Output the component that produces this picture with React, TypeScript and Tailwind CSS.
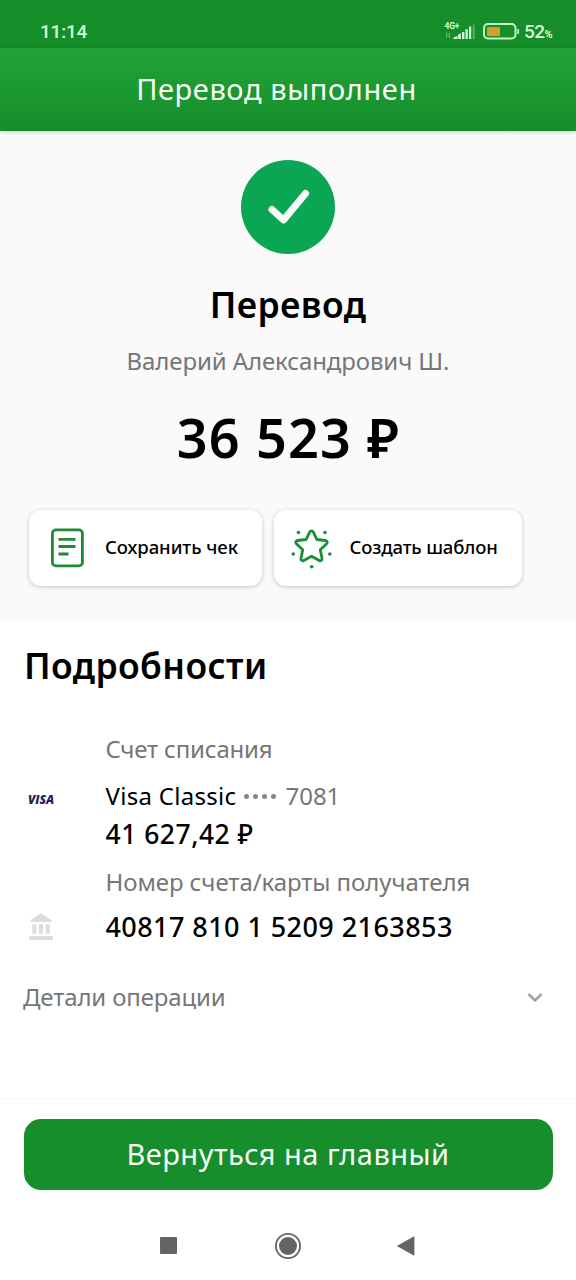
import React from "react";

function StatusBar() {
  return (
    <div className="flex h-12 items-start justify-between bg-[#158e2a] pl-10 pr-6 pt-[20px] text-[#d3fbd3]">
      <span className="font-[Roboto] text-[19px] font-medium leading-6 tracking-[-0.2px]">11:14</span>
      <div className="flex items-start">
        <svg width="32" height="20" viewBox="0 0 32 20" className="mt-[1px]">
          <text x="0.5" y="8" fontFamily="Roboto, sans-serif" fontSize="8.5" fontWeight="700" fill="#d3fbd3" textLength="15">4G+</text>
          <g fill="#d3fbd3">
            <path d="M2.2 11.5h1v5h-1zM4.8 12h1v5h-1z" opacity=".55" />
            <path d="M9.500 18v-1.500l4-1.500V18zM14.200 13.500l2.600-1.200V18h-2.600zM18 11h2.400v7H18zM21.500 8.200h2.300V18h-2.300zM25 5.500h2.200V18H25z" />
            <path d="M28.700 3.500h2V18h-2z" opacity=".35" />
          </g>
        </svg>
        <svg width="38" height="20" viewBox="0 0 38 20" className="ml-[7px] mt-[1px]">
          <rect x="1" y="3" width="31.500" height="14.500" rx="4" fill="none" stroke="#c4f5c4" strokeWidth="2" />
          <rect x="4" y="6" width="13" height="9" rx="1" fill="#cfa32b" />
          <path d="M34.300 8h.8a1 1 0 0 1 1 1v3a1 1 0 0 1-1 1h-.8z" fill="#c4f5c4" />
        </svg>
        <span className="ml-[3px] font-[Roboto] text-[19px] font-medium leading-6 tracking-[-0.6px]">
          52<span className="text-[11px] font-bold">%</span>
        </span>
      </div>
    </div>
  );
}

function ReceiptIcon() {
  return (
    <svg width="34" height="40" viewBox="0 0 34 40" fill="none" stroke="#1f8a38" strokeWidth="2.8">
      <rect x="2.4" y="1.9" width="30" height="36" rx="3.5" />
      <path d="M8.500 11.300h17M8.500 18.500h17M8.500 26h10" />
    </svg>
  );
}

function StarIcon() {
  return (
    <svg width="42" height="42" viewBox="0 0 42 42" fill="none">
      <path
        d="M21.500 3.800c.9 0 1.500.5 1.900 1.300l3.400 7.400 8.600 1c1.800.2 2.500 2 1.200 3.200l-6.300 6 1.700 8.800c.3 1.700-1.300 2.900-2.800 2L21.500 29.300l-7.700 4.200c-1.500.9-3.100-.3-2.800-2l1.700-8.800-6.300-6c-1.300-1.200-.6-3 1.200-3.200l8.600-1 3.400-7.400c.4-.8 1-1.300 1.900-1.300z"
        stroke="#1b8d36"
        strokeWidth="2.800"
        strokeLinejoin="round"
      />
      <g fill="#1b8d36">
        <circle cx="8.500" cy="5.500" r="1.800" />
        <circle cx="35" cy="5.500" r="1.800" />
        <circle cx="3.300" cy="27" r="1.800" />
        <circle cx="39.800" cy="27" r="1.800" />
        <circle cx="21.700" cy="39.700" r="1.800" />
      </g>
    </svg>
  );
}

function BankIcon() {
  return (
    <svg width="24" height="28" viewBox="0 0 24 28" fill="#dcdcdc">
      <path d="M12 0 22.500 7.300V9h-21V7.300zM3.300 11.200h4v9.500h-4zM10 11.200h4v9.500h-4zM16.700 11.200h4v9.500h-4z" />
      <rect x="0" y="23" width="24" height="4" rx="1" />
    </svg>
  );
}

function NavBar() {
  return (
    <div className="mt-[41.500px] flex h-7 items-center pl-[160px]">
      <div className="h-[17px] w-[17px] rounded-[1px] bg-[#646464]" />
      <svg width="28" height="28" viewBox="0 0 28 28" className="ml-[97px]">
        <circle cx="14" cy="14" r="12.100" fill="none" stroke="#646464" strokeWidth="1.800" />
        <circle cx="14" cy="14" r="9" fill="#646464" />
      </svg>
      <svg width="18" height="20" viewBox="0 0 18 20" className="ml-[95px]">
        <path d="M17 .8v18.400L.5 10z" fill="#646464" stroke="#646464" strokeWidth=".8" strokeLinejoin="round" />
      </svg>
    </div>
  );
}

export default function App() {
  return (
    <div className="flex h-[1280px] w-[576px] flex-col overflow-hidden bg-white font-['Noto_Sans',sans-serif] text-black">
      <StatusBar />
      <header className="relative flex h-[83px] justify-center bg-linear-to-b from-[#22a338] to-[#158e2a] pr-[23px] pt-[21px] shadow-[0_1px_4px_rgba(0,0,0,0.2)]">
        <h1 className="whitespace-nowrap text-[29px] leading-10 tracking-[0.600px] text-[#f6fff6]">Перевод выполнен</h1>
      </header>

      <section className="flex h-[490px] flex-col items-center bg-[#fafafa] pt-[29px]">
        <div className="flex h-[94px] w-[94px] items-center justify-center rounded-full bg-[#0ba653]">
          <svg width="44" height="38" viewBox="0 0 44 38" fill="none" className="ml-[2px]">
            <path d="M5 21.500 16.500 32 38.500 5.500" stroke="#fafafa" strokeWidth="7" strokeLinecap="round" strokeLinejoin="round" />
          </svg>
        </div>
        <h2 className="mt-[28px] whitespace-nowrap text-[35.500px] font-semibold leading-[44px] tracking-[0.4px]">Перевод</h2>
        <p className="mt-[19px] whitespace-nowrap text-2xl leading-8 tracking-[-0.1px] text-[#767676]">Валерий Александрович Ш.</p>
        <p className="mt-[28px] whitespace-nowrap pl-px text-[54px] font-semibold leading-[64px] tracking-[1.100px]">36 523 ₽</p>
        <div className="mt-[41px] flex h-[76px] gap-3 self-stretch pl-[29px]">
          <button className="flex w-[233px] items-center rounded-xl bg-white pl-[21px] shadow-[0_1px_4px_rgba(0,0,0,0.22)]">
            <ReceiptIcon />
            <span className="mb-[2px] ml-[21px] whitespace-nowrap text-[18.500px] font-medium leading-6 tracking-[-0.05px]">Сохранить чек</span>
          </button>
          <button className="flex w-[248px] items-center rounded-xl bg-white pl-[16px] shadow-[0_1px_4px_rgba(0,0,0,0.22)]">
            <StarIcon />
            <span className="mb-[2px] ml-[17.500px] whitespace-nowrap text-[18.500px] font-medium leading-6 tracking-[-0.15px]">Создать шаблон</span>
          </button>
        </div>
      </section>

      <section className="flex h-[477px] flex-col whitespace-nowrap pl-6 pt-[22px]">
        <h2 className="text-[35.500px] font-semibold leading-[44px] tracking-[0.4px]">Подробности</h2>
        <div className="mt-[46px] flex">
          <div className="w-[81.500px] pl-1 pt-[59px]">
            <span className="block font-['Open_Sans'] text-[12px] font-extrabold italic leading-4 tracking-[-0.050px] text-[#1f2160]">VISA</span>
          </div>
          <div>
            <p className="text-2xl leading-8 tracking-[-0.18px] text-[#767676]">Счет списания</p>
            <p className="mt-[15px] flex text-2xl leading-8">
              <span className="tracking-[0.3px]">Visa Classic</span>
              <span className="ml-2 flex items-center gap-[4px]">
                {[0, 1, 2, 3].map((i) => (
                  <i key={i} className="block h-[5px] w-[5px] rounded-full bg-[#868686]" />
                ))}
              </span>
              <span className="ml-[9px] text-[#767676]">7081</span>
            </p>
            <p className="mt-[6px] text-[26.500px] font-medium leading-8 tracking-[0.5px]">41 627,42 ₽</p>
          </div>
        </div>
        <div className="mt-[16px] flex">
          <div className="w-[81.500px] pl-[5px] pt-[47px]">
            <BankIcon />
          </div>
          <div>
            <p className="text-2xl leading-8 tracking-[-0.08px] text-[#767676]">Номер счета/карты получателя</p>
            <p className="mt-[13px] text-[27px] font-medium leading-8 tracking-[0.43px]">40817 810 1 5209 2163853</p>
          </div>
        </div>
        <div className="mt-[38px] flex items-center justify-between pr-[33px]">
          <span className="-ml-px text-2xl leading-8 tracking-[-0.15px] text-[#767676]">Детали операции</span>
          <svg width="16" height="11" viewBox="0 0 16 11" fill="none">
            <path d="M1.500 2 8 8.500 14.500 2" stroke="#a2a2a2" strokeWidth="2.500" />
          </svg>
        </div>
      </section>

      <footer className="flex flex-1 flex-col border-t border-[#f7f7f7] pt-[20px]">
        <button className="mx-[23.500px] flex h-[71px] items-center justify-center rounded-[17px] bg-[#168e2b] pb-[1px] text-[29px] leading-10 tracking-[0.500px] text-[#f8fff8]">
          Вернуться на главный
        </button>
        <NavBar />
      </footer>
    </div>
  );
}
